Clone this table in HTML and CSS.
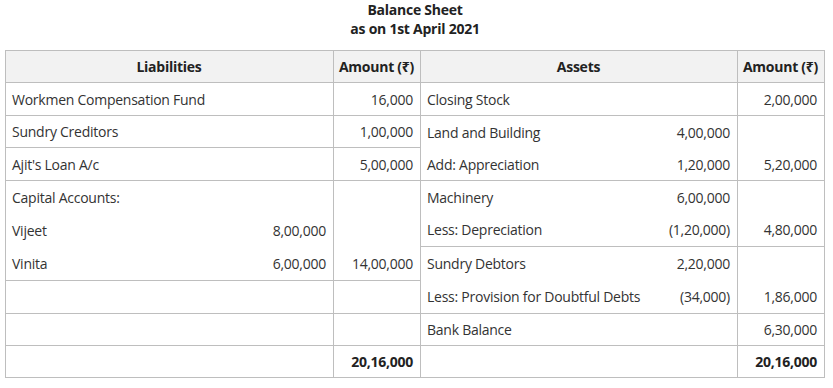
FILE: index.html
```html
<!DOCTYPE html>
<html lang="en">
<head>
<meta charset="utf-8">
<title>Balance Sheet</title>
<link rel="stylesheet" href="styles.css">
</head>
<body>
<div class="sheet">
  <div class="title">
    <div>Balance Sheet</div>
    <div>as on 1st April 2021</div>
  </div>
  <div class="ledger">
    <div class="cell head">Liabilities</div>
    <div class="cell head">Amount (₹)</div>
    <div class="cell head">Assets</div>
    <div class="cell head">Amount (₹)</div>

    <div class="cell">Workmen Compensation Fund</div>
    <div class="cell num">16,000</div>
    <div class="cell">Closing Stock</div>
    <div class="cell num">2,00,000</div>

    <div class="cell">Sundry Creditors</div>
    <div class="cell num">1,00,000</div>
    <div class="cell stack span2">
      <div class="line"><span>Land and Building</span><span>4,00,000</span></div>
      <div class="line"><span>Add: Appreciation</span><span>1,20,000</span></div>
    </div>
    <div class="cell stack num span2">
      <div class="line"></div>
      <div class="line">5,20,000</div>
    </div>

    <div class="cell">Ajit's Loan A/c</div>
    <div class="cell num">5,00,000</div>

    <div class="cell stack span3">
      <div class="line"><span>Capital Accounts:</span></div>
      <div class="line"><span>Vijeet</span><span>8,00,000</span></div>
      <div class="line"><span>Vinita</span><span>6,00,000</span></div>
    </div>
    <div class="cell stack num span3">
      <div class="line"></div>
      <div class="line"></div>
      <div class="line">14,00,000</div>
    </div>
    <div class="cell stack span2">
      <div class="line"><span>Machinery</span><span>6,00,000</span></div>
      <div class="line"><span>Less: Depreciation</span><span>(1,20,000)</span></div>
    </div>
    <div class="cell stack num span2">
      <div class="line"></div>
      <div class="line">4,80,000</div>
    </div>

    <div class="cell stack span2">
      <div class="line"><span>Sundry Debtors</span><span>2,20,000</span></div>
      <div class="line"><span>Less: Provision for Doubtful Debts</span><span>(34,000)</span></div>
    </div>
    <div class="cell stack num span2">
      <div class="line"></div>
      <div class="line">1,86,000</div>
    </div>

    <div class="cell"></div>
    <div class="cell num"></div>

    <div class="cell"></div>
    <div class="cell num"></div>
    <div class="cell">Bank Balance</div>
    <div class="cell num">6,30,000</div>

    <div class="cell"></div>
    <div class="cell num total">20,16,000</div>
    <div class="cell"></div>
    <div class="cell num total">20,16,000</div>
  </div>
</div>
</body>
</html>
```

FILE: styles.css
```css
html, body {
  margin: 0;
  padding: 0;
  background: #ffffff;
}

body {
  font-family: "Open Sans", "Noto Sans", sans-serif;
  font-size: 14px;
  letter-spacing: -0.25px;
  color: #333333;
}

.sheet {
  width: 820px;
  margin-left: 5px;
}

.title {
  text-align: center;
  font-weight: 700;
  color: #222222;
  line-height: 19px;
  margin-bottom: 12px;
}

.ledger {
  display: grid;
  grid-template-columns: 327px 86px 316px 86px;
  grid-template-rows: 31px 32px 31px 32px 32px 32px 33px 32px 31px 31px;
  gap: 1px;
  padding: 1px;
  background: #bebebe;
}

.cell {
  background: #ffffff;
  display: flex;
  align-items: center;
  padding: 0 7px 0 6px;
  min-width: 0;
  white-space: nowrap;
}

.head {
  background: #f2f2f2;
  justify-content: center;
  font-weight: 700;
  color: #222222;
}

.num {
  justify-content: flex-end;
}

.total {
  font-weight: 700;
  color: #222222;
}

.span2 {
  grid-row: span 2;
}

.span3 {
  grid-row: span 3;
}

.stack {
  flex-direction: column;
  align-items: stretch;
}

.line {
  flex: 1;
  display: flex;
  align-items: center;
  justify-content: space-between;
}

.num .line {
  justify-content: flex-end;
}
```
